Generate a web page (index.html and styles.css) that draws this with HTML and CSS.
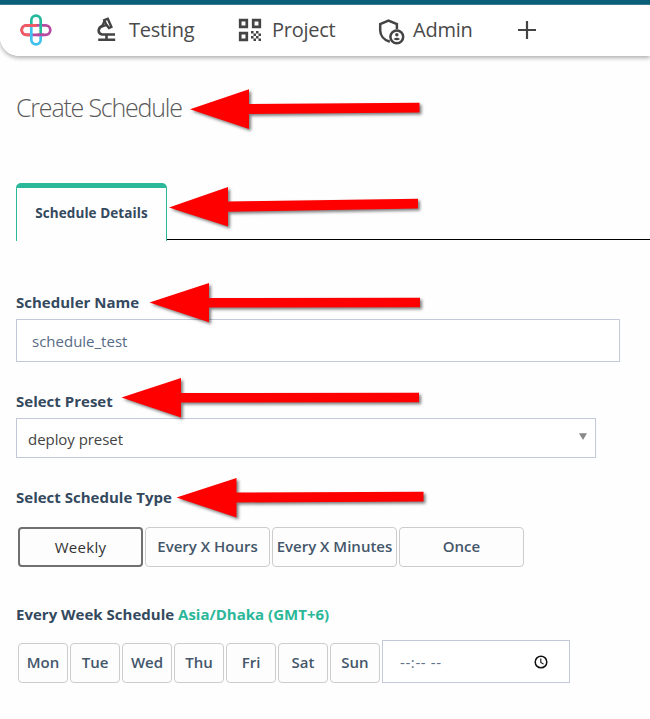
FILE: index.html
```html
<!DOCTYPE html>
<html lang="en">
<head>
<meta charset="utf-8">
<title>Create Schedule</title>
<link rel="stylesheet" href="styles.css">
</head>
<body>
<header class="topbar">
  <svg class="logo" width="32" height="32" viewBox="0 0 32 32" fill="none" stroke-width="2.7">
    <rect x="1.7" y="11.4" width="28.6" height="9.4" rx="4.7" stroke="#b64aa0"/>
    <path d="M16 11.4H6.4a4.7 4.7 0 0 0 0 9.4H11" stroke="#f05a60"/>
    <path d="M11.3 11.8V6.4a4.7 4.7 0 0 1 9.4 0V20" stroke="#23b99a"/>
    <path d="M20.7 20.2v5.4a4.7 4.7 0 0 1-9.4 0V12.8" stroke="#3fc1ee"/>
    <path d="M9 11.4h8" stroke="#f05a60"/>
    <path d="M17 20.8h7" stroke="#b64aa0"/>
  </svg>
  <nav class="nav">
    <a class="nav-item testing">
      <svg width="22" height="26" viewBox="0 0 22 26" fill="none" stroke="#444" stroke-width="2.6">
        <path d="M8.3 4.2l3.5-1.5 3.6 8.3-2.4 1.1-3-3.8z" stroke-width="2.4"/>
        <path d="M8.6 4.5L6.2 10.5l5.2-1.8" stroke-width="2.2"/>
        <path d="M6.5 9.8C1.8 11.8 1.2 17.2 6 18.5h13M10.5 18v5M2.2 23.7h17"/>
      </svg>
      <span>Testing</span>
    </a>
    <a class="nav-item project">
      <svg width="24" height="24" viewBox="0 0 24 24">
        <path d="M2.2 2.2h6.6v6.6H2.2zM15.2 2.2h6.6v6.6h-6.6zM2.2 15.2h6.6v6.6H2.2z" fill="none" stroke="#444" stroke-width="2.7"/>
        <path d="M13 13h2.5v2.5H13zM18 13h2.5v2.5H18zM15.5 15.5H18V18h-2.5zM20.5 15.5H23V18h-2.5zM13 18h2.5v2.5H13zM18 18h2.5v2.5H18zM15.5 20.5H18V23h-2.5zM20.5 20.5H23V23h-2.5z" fill="#444"/>
      </svg>
      <span>Project</span>
    </a>
    <a class="nav-item admin">
      <svg width="27" height="27" viewBox="0 0 27 27" fill="none" stroke="#444" stroke-width="2.5">
        <path d="M11.8 22.8C5.3 20.9 2.2 16 2.2 11.3V5.2l8.3-3.5 8.4 3.5v5"/>
        <circle cx="18.8" cy="17.8" r="6.4"/>
        <circle cx="18.8" cy="15.7" r="1.7" fill="#444" stroke="none"/>
        <path d="M15.5 19.9q3.3-2.3 6.6 0-3.3 2.9-6.6 0" fill="#444" stroke="none"/>
      </svg>
      <span>Admin</span>
    </a>
    <a class="nav-item add" aria-label="Add">
      <svg width="18" height="18" viewBox="0 0 18 18" stroke="#444" stroke-width="2.2"><path d="M9 0v18M0 9h18"/></svg>
    </a>
  </nav>
</header>
<main class="page">
  <h1 class="title">Create Schedule</h1>
  <div class="tabs"><div class="tab">Schedule Details</div><div class="tab-line"></div></div>
  <label class="label">Scheduler Name</label>
  <div class="input">schedule_test</div>
  <label class="label preset-label">Select Preset</label>
  <div class="select"><span>deploy preset</span><svg width="8" height="7" viewBox="0 0 8 7"><path d="M0 .3h8L4 7z" fill="#888"/></svg></div>
  <label class="label type-label">Select Schedule Type</label>
  <div class="types">
    <button class="choice type selected">Weekly</button>
    <button class="choice type">Every X Hours</button>
    <button class="choice type">Every X Minutes</button>
    <button class="choice type">Once</button>
  </div>
  <label class="label week-label">Every Week Schedule <span class="zone">Asia/Dhaka (GMT+6)</span></label>
  <div class="days">
    <button class="choice day">Mon</button>
    <button class="choice day">Tue</button>
    <button class="choice day">Wed</button>
    <button class="choice day">Thu</button>
    <button class="choice day">Fri</button>
    <button class="choice day">Sat</button>
    <button class="choice day">Sun</button>
    <div class="time"><span>--:-- --</span><svg width="14" height="14" viewBox="0 0 14 14" fill="none" stroke="#111"><circle cx="7" cy="7" r="5.8" stroke-width="1.5"/><path d="M6.8 3.6v3.8l2.8 1.7" stroke-width="1.1"/></svg></div>
  </div>
</main>
<svg class="arrows" width="650" height="719" viewBox="0 0 650 719" fill="#f00">
  <path d="M190 109.3L249 89.3V104L419.5 102.7V112.5L249 114V129z"/>
  <path d="M169 207.5L228 187V201.5L418 198.8V208.5L228 211.8V226.5z"/>
  <path d="M149.5 302.5L209 283V298L420 297.8V307.3L209 307.5V322.3z"/>
  <path d="M121.5 397.5L181 378V393L419 392.8V402.3L181 402.6V417.5z"/>
  <path d="M176.5 497.5L236.5 478V492.5L423.5 491.8V501.5L236.5 502.5V517.5z"/>
</svg>
</body>
</html>
```

FILE: styles.css
```css
* { box-sizing: border-box; }
body {
  margin: 0;
  width: 650px;
  height: 719px;
  overflow: hidden;
  background: #fefefe;
  color: #34495e;
  font-family: "Open Sans", sans-serif;
}
.topbar {
  display: flex;
  height: 56px;
  padding: 10px 0 0 20px;
  background: linear-gradient(#0b5f78 0 4px, #3a7d91 4px 5px, #fff 5px);
  border-bottom-left-radius: 19px;
  box-shadow: 0 2px 4px rgba(0, 0, 0, .32);
}
.logo { position: relative; left: -.5px; margin-top: 4px; }
.nav { display: flex; align-items: flex-start; }
.nav-item {
  display: flex;
  height: 40px;
  align-items: center;
  color: #4a4a4a;
  font-size: 20px;
  line-height: 40px;
  letter-spacing: -.25px;
}
.testing { width: 142px; margin-left: 44px; gap: 11px; }
.testing svg { position: relative; top: -1px; }
.project { width: 140px; gap: 10px; }
.project svg { position: relative; left: -.5px; }
.admin { width: 140px; gap: 8px; }
.admin svg { position: relative; top: 2px; }
.page { padding: 0 0 0 16px; }
.title {
  height: 127px;
  margin: 0;
  padding-top: 33px;
  color: #5a5a5a;
  font-size: 25px;
  font-weight: 300;
  line-height: 36px;
  letter-spacing: -1.2px;
}
.tabs { display: flex; height: 58px; }
.tab {
  width: 151px;
  border: 1px solid #2bb899;
  border-top-width: 5px;
  border-bottom: 0;
  border-radius: 5px 5px 0 0;
  font-size: 13.5px;
  font-weight: 700;
  line-height: 51px;
  text-align: center;
  letter-spacing: .08px;
}
.tab-line { flex: 1; margin-bottom: 1px; border-bottom: 1px solid #000; }
.label {
  display: block;
  height: 24px;
  margin-top: 50px;
  font-size: 15px;
  font-weight: 700;
  line-height: 22px;
  letter-spacing: .01px;
}
.input, .select, .time {
  display: flex;
  align-items: center;
  border: 1px solid #c2c9d8;
  background: #fff;
  font-size: 15px;
}
.input {
  width: 604px;
  height: 43px;
  margin-top: 4px;
  padding-left: 15px;
  color: #566b86;
}
.preset-label { margin-top: 28px; }
.select {
  width: 580px;
  height: 40px;
  margin-top: 4px;
  padding: 2px 8px 0 11px;
  justify-content: space-between;
  color: #444;
  letter-spacing: -.05px;
}
.select svg { margin-top: -5px; }
.type-label { margin-top: 28px; }
.types { display: flex; gap: 2px; margin: 17px 0 0 2px; }
.choice {
  height: 40px;
  padding: 0 0 2px;
  border: 1px solid #ccc;
  border-radius: 4px;
  background: #fdfdfd;
  color: #44566a;
  font-family: inherit;
  font-size: 15px;
  font-weight: 600;
  white-space: nowrap;
}
.type { width: 125px; }
.selected {
  padding: 0;
  border: 2px solid #707070;
  color: #333;
  font-weight: 500;
  letter-spacing: .3px;
}
.week-label { margin-top: 36px; }
.zone { color: #2bb899; }
.days { display: flex; align-items: flex-start; gap: 2px; margin: 13px 0 0 2px; }
.day { width: 50px; margin-top: 3px; }
.time {
  width: 188px;
  height: 43px;
  padding: 0 21px 0 17px;
  justify-content: space-between;
  color: #60718a;
  letter-spacing: .6px;
}
.arrows {
  position: absolute;
  top: 0;
  left: 0;
  pointer-events: none;
  filter: drop-shadow(2px 2px 1.5px rgba(0, 0, 0, .5));
}
```
